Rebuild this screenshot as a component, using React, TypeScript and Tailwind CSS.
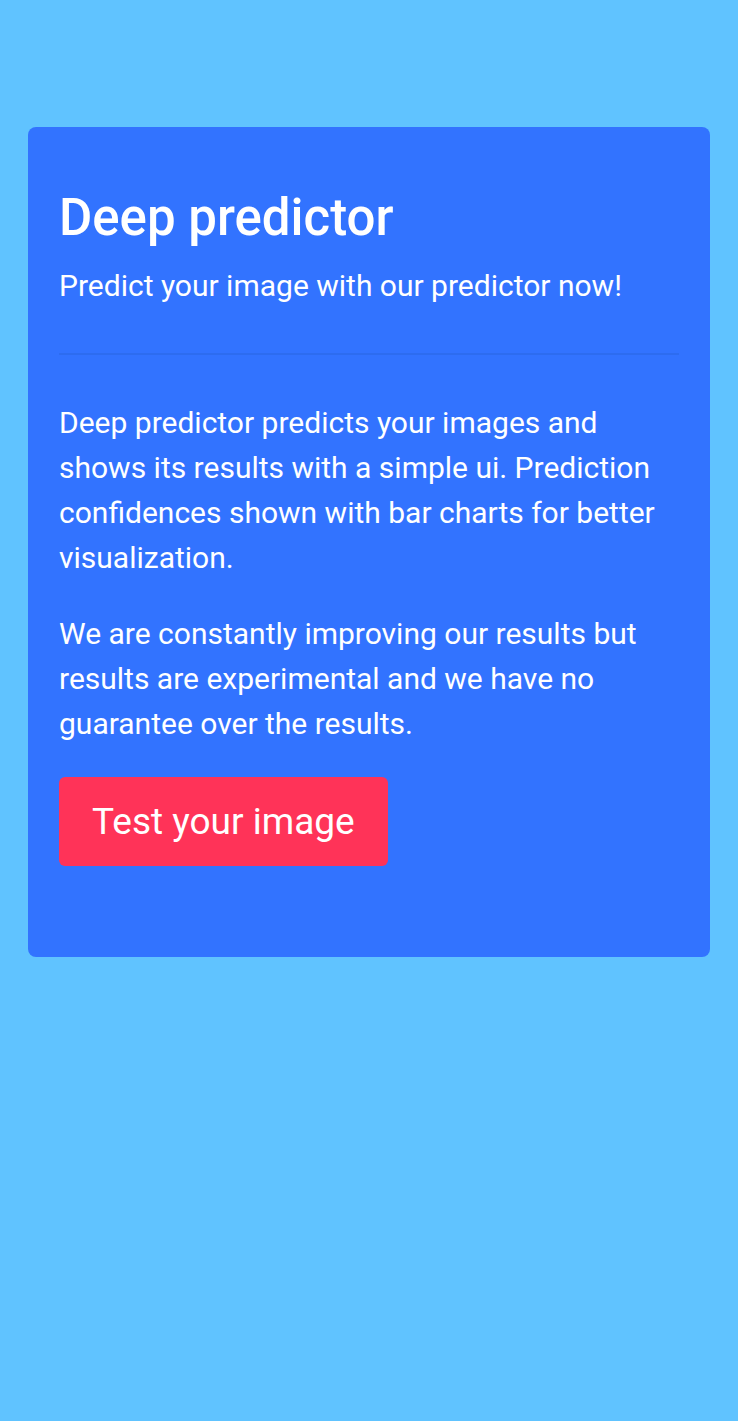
export default function App() {
    return (
        <div className="min-h-[1421px] bg-[#60c3ff] px-[28px] pt-[127px] font-['Roboto',sans-serif] text-white">
            <div className="rounded-[8px] bg-[#3273ff] px-[31px] pt-[63px] pb-[91px]">
                <h1 className="text-[51px] leading-[56px] font-medium">Deep predictor</h1>
                <p className="mt-[20px] text-[30px] leading-[40px]">
                    Predict your image with our predictor now!
                </p>
                <div className="mt-[47px] h-[2px] bg-[#2d6cf0]" />
                <p className="mt-[45px] text-[30px] leading-[45px]">
                    Deep predictor predicts your images and shows its results with a simple ui.
                    Prediction confidences shown with bar charts for better visualization.
                </p>
                <p className="mt-[31px] text-[30px] leading-[45px]">
                    We are constantly improving our results but results are experimental and we
                    have no guarantee over the results.
                </p>
                <button className="mt-[31px] h-[89px] rounded-[6px] bg-[#ff3358] px-[33px] text-[37px] text-white">
                    Test your image
                </button>
            </div>
        </div>
    )
}
